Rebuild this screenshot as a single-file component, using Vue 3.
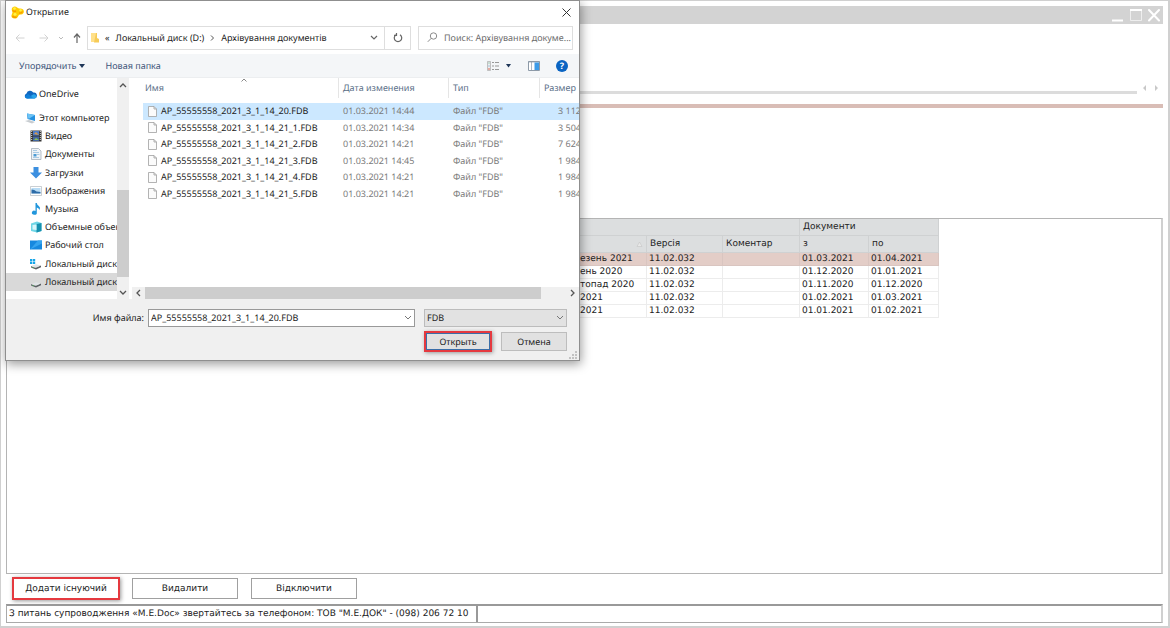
<script setup>
import { ref } from 'vue'

const fileName = ref('AP_55555558_2021_3_1_14_20.FDB')
const fileType = ref('FDB')
const search = ref('')
const selected = ref(0)

const places = [
  { icon: 'video', label: 'Видео' },
  { icon: 'doc', label: 'Документы' },
  { icon: 'down', label: 'Загрузки' },
  { icon: 'image', label: 'Изображения' },
  { icon: 'music', label: 'Музыка' },
  { icon: 'cube', label: 'Объемные объекты' },
  { icon: 'desk', label: 'Рабочий стол' },
  { icon: 'sysdisk', label: 'Локальный диск' },
  { icon: 'disk', label: 'Локальный диск', active: true },
]

const files = [
  { name: 'AP_55555558_2021_3_1_14_20.FDB', date: '01.03.2021 14:44', size: '3 112' },
  { name: 'AP_55555558_2021_3_1_14_21_1.FDB', date: '01.03.2021 14:34', size: '3 504' },
  { name: 'AP_55555558_2021_3_1_14_21_2.FDB', date: '01.03.2021 14:21', size: '7 624' },
  { name: 'AP_55555558_2021_3_1_14_21_3.FDB', date: '01.03.2021 14:45', size: '1 984' },
  { name: 'AP_55555558_2021_3_1_14_21_4.FDB', date: '01.03.2021 14:21', size: '1 984' },
  { name: 'AP_55555558_2021_3_1_14_21_5.FDB', date: '01.03.2021 14:21', size: '1 984' },
]

const archives = [
  { period: 'езень 2021', version: '11.02.032', from: '01.03.2021', to: '01.04.2021' },
  { period: 'ень 2020', version: '11.02.032', from: '01.12.2020', to: '01.01.2021' },
  { period: 'топад 2020', version: '11.02.032', from: '01.11.2020', to: '01.12.2020' },
  { period: '2021', version: '11.02.032', from: '01.02.2021', to: '01.03.2021' },
  { period: '2021', version: '11.02.032', from: '01.01.2021', to: '01.02.2021' },
]
</script>

<template>
  <div class="app">
    <header class="app-title">
      <button type="button" aria-label="Згорнути">
        <svg width="12" height="14" viewBox="0 0 12 14"><path d="M0 12.500h11" stroke="#fff" stroke-width="2" /></svg>
      </button>
      <button type="button" aria-label="Розгорнути">
        <svg width="12" height="14" viewBox="0 0 12 14"><path d="M.5 2v10.500h11V2" fill="none" stroke="#eee" /><path d="M0 2h12" stroke="#fff" stroke-width="2" /></svg>
      </button>
      <button type="button" aria-label="Закрити">
        <svg width="12" height="14" viewBox="0 0 12 14"><path d="M1 2l10 10.500M11 2L1 12.500" stroke="#fff" stroke-width="2" stroke-linecap="round" /></svg>
      </button>
    </header>

    <div class="tabs">
      <div class="tabs-line"></div>
      <svg width="22" height="8" viewBox="0 0 22 8"><path d="M5 1v6L2 4zM14 1v6l3-3z" fill="#c8c8c8" /></svg>
    </div>
    <div class="accent"></div>

    <main class="panel">
      <table class="archive">
        <colgroup>
          <col class="c-period" /><col class="c-version" /><col class="c-note" /><col class="c-from" /><col class="c-to" />
        </colgroup>
        <thead>
          <tr><th colspan="3"></th><th colspan="2">Документи</th></tr>
          <tr>
            <th class="sorted"><svg width="7" height="7" viewBox="0 0 7 7"><path d="M3.500 1L1 5.500h5z" fill="#e8e8e8" stroke="#c4c4c4" stroke-width=".6" /></svg></th>
            <th>Версія</th><th>Коментар</th><th>з</th><th>по</th>
          </tr>
        </thead>
        <tbody>
          <tr v-for="(a, i) in archives" :key="i" :class="{ current: i === 0 }">
            <td class="period">{{ a.period }}</td><td>{{ a.version }}</td><td></td><td>{{ a.from }}</td><td>{{ a.to }}</td>
          </tr>
        </tbody>
      </table>
    </main>

    <div class="actions">
      <button type="button" class="marked">Додати існуючий</button>
      <button type="button">Видалити</button>
      <button type="button">Відключити</button>
    </div>

    <footer class="status">
      <div class="support">З питань супроводження «M.E.Doc» звертайтесь за телефоном: ТОВ "М.Е.ДОК" - (098) 206 72 10</div>
      <div class="status-rest"></div>
    </footer>

    <section class="dialog" role="dialog" aria-labelledby="dialog-title">
      <div class="dlg-title">
        <svg width="13" height="13" viewBox="0 0 13 13">
          <path d="M1 2Q2.500-.3 5 .8 6.500 2 8 2.500q4.500-.5 4.800 2.500T10 8.500Q8.500 8 7.500 9.500 6.500 12.800 3.500 12.600-.2 12 .6 9 1.500 7 1.500 6 .3 4 1 2z" fill="#fc0" />
          <path d="M1.500 10q1.500 2 4 1M1.500 4.500q1.500 1.500 3.500.5M8 7q2.500.5 3.500-1.500" fill="none" stroke="#f79a00" stroke-width="1.400" />
          <circle cx="3.500" cy="2.500" r="1.300" fill="#fff04a" /><circle cx="9.500" cy="4.300" r="1.200" fill="#fff04a" /><circle cx="4" cy="8.300" r="1.500" fill="#fff04a" />
        </svg>
        <span id="dialog-title">Открытие</span>
        <button type="button" class="dlg-close" aria-label="Закрыть">
          <svg width="9" height="9" viewBox="0 0 9 9"><path d="M.5.5l8 8M8.500.5l-8 8" stroke="#333" /></svg>
        </button>
      </div>

      <div class="nav">
        <div class="nav-buttons">
          <button type="button" aria-label="Назад"><svg width="10" height="10" viewBox="0 0 10 10"><path d="M9.500 5H1M4.500 1.500L1 5l3.500 3.500" fill="none" stroke="#d2d2d2" /></svg></button>
          <button type="button" aria-label="Вперед"><svg width="10" height="10" viewBox="0 0 10 10"><path d="M.5 5H9M5.500 1.500L9 5 5.500 8.500" fill="none" stroke="#d2d2d2" /></svg></button>
          <button type="button" aria-label="Последние расположения"><svg width="6" height="10" viewBox="0 0 6 10"><path d="M1 4l2 2 2-2" fill="none" stroke="#bbb" /></svg></button>
          <button type="button" aria-label="Вверх"><svg width="8" height="10" viewBox="0 0 8 10"><path d="M4 10V1M1 4.500L4 1l3 3.500" fill="none" stroke="#666" stroke-width="1.200" /></svg></button>
        </div>
        <div class="address">
          <svg class="folder" width="8" height="11" viewBox="0 0 8 11"><path d="M0 1h6v9H0z" fill="#ffe08a" /><path d="M5 1h1v5l2 1v3.500H3z" fill="#f6cb58" /></svg>
          <span class="crumb">«</span>
          <a href="#" class="crumb">Локальный диск (D:)</a>
          <svg width="5" height="8" viewBox="0 0 5 8"><path d="M1 1.500L3.500 4 1 6.500" fill="none" stroke="#555" /></svg>
          <a href="#" class="crumb">Архівування документів</a>
          <button type="button" class="drop" aria-label="Предыдущие расположения"><svg width="8" height="6" viewBox="0 0 8 6"><path d="M1 1l3 3 3-3" fill="none" stroke="#666" stroke-width="1.200" /></svg></button>
          <button type="button" class="refresh" aria-label="Обновить"><svg width="10" height="10" viewBox="0 0 10 10"><path d="M7 1.800A3.700 3.700 0 1 1 3 1.800M3.500 -.2v2.500H1" fill="none" stroke="#666" stroke-width="1.200" /></svg></button>
        </div>
        <label class="search">
          <svg width="11" height="11" viewBox="0 0 11 11"><circle cx="6.500" cy="4" r="3.200" fill="none" stroke="#8a8a8a" /><path d="M4.200 6.300L.8 9.800" stroke="#8a8a8a" /></svg>
          <input v-model="search" type="text" placeholder="Поиск: Архівування докуме..." aria-label="Поиск" />
        </label>
      </div>

      <div class="toolbar">
        <button type="button" class="tool-text">Упорядочить <svg width="6" height="4" viewBox="0 0 6 4"><path d="M0 0h6L3 4z" fill="#1e3658" /></svg></button>
        <button type="button" class="tool-text">Новая папка</button>
        <span class="spacer"></span>
        <button type="button" class="view" aria-label="Изменить представление">
          <svg width="12" height="10" viewBox="0 0 12 10"><path d="M.5.5h3v9h-3z" fill="#eee" stroke="#aaa" stroke-width=".7" /><path d="M1.500 2h1" stroke="#5a8" /><path d="M1.500 5h1" stroke="#59c" /><path d="M1.500 8h1" stroke="#d65" stroke-width="2" /><path d="M5 1.500h2m1 0h4M5 5h2m1 0h4M5 8.500h2m1 0h4" stroke="#999" /></svg>
          <svg width="5" height="4" viewBox="0 0 5 4"><path d="M0 0h5L2.500 3.500z" fill="#1e3658" /></svg>
        </button>
        <button type="button" class="preview" aria-label="Область просмотра">
          <svg width="12" height="10" viewBox="0 0 12 10"><path d="M.5.5h11v9H.5z" fill="#fff" stroke="#8d9aa8" /><path d="M0 1h12M3.500 1v8" stroke="#8d9aa8" stroke-width=".7" /><path d="M6.500 1.500H11V9H6.500z" fill="#3c9be8" /></svg>
        </button>
        <button type="button" class="help" aria-label="Справка">?</button>
      </div>

      <div class="browser">
        <nav class="tree">
          <a href="#" class="place root">
            <svg width="13" height="9" viewBox="0 0 13 9"><path d="M3 8.500a2.600 2.600 0 0 1-.5-5A3.700 3.700 0 0 1 9.200 2.500 3 3 0 0 1 10.500 8.500z" fill="#1067c0" /><path d="M3 8.500L9 4.500a2.500 2.500 0 0 1 3.500 2.300q0 1.700-2 1.700z" fill="#28a4ea" /><path d="M3 8.500Q1 8.500.8 6.500L4 4l5 3.500z" fill="#0f7fd8" /></svg>
            OneDrive
          </a>
          <div class="tree-list">
            <a href="#" class="place root">
              <svg width="13" height="11" viewBox="0 0 13 11"><path d="M3 .5l8 1.500v6L3.500 6z" fill="#2591e0" /><path d="M3 .5l8 1.500-6.500 4z" fill="#6cc3f5" /><path d="M1 8l4-1 6 2-3 1.500z" fill="#c7ccd0" /></svg>
              Этот компьютер
            </a>
            <a v-for="(p, i) in places" :key="i" href="#" class="place" :class="{ active: p.active }">
              <svg width="12" height="12" viewBox="0 0 12 12">
                <g v-if="p.icon === 'video'"><path d="M.5.5h11v11H.5z" fill="#333" /><path d="M3 1h6v4.500H3z" fill="#4a7cc9" /><path d="M3 6.500h6V11H3z" fill="#4266a0" /><path d="M4 4l2-2 3 3z" fill="#d89748" /><path d="M4 10l2-2 3 2z" fill="#8ac05a" /><path d="M1.700 1v10M10.300 1v10" stroke="#ddd" stroke-dasharray="1 1" /></g>
                <g v-else-if="p.icon === 'doc'"><path d="M1.500.5h7l2.500 2.500v8.500H1.500z" fill="#f0f3f6" stroke="#9ba7b2" stroke-width=".7" /><path d="M3 2.500h4M3 4.500h6M7 6.500h2.500M3 9.500h6" stroke="#a9cbe4" /><path d="M3.500 6h3v2.500h-3z" fill="#4c9bd4" /></g>
                <g v-else-if="p.icon === 'down'"><path d="M3.500 0h5v5.500H12L6 11.500 0 5.500h3.500z" fill="#3b8fe0" /></g>
                <g v-else-if="p.icon === 'image'"><path d="M.5 1.500h11v9H.5z" fill="#fff" stroke="#b3bac0" stroke-width=".7" /><path d="M1.500 3h9v5.500h-9z" fill="#b9dcf5" /><path d="M1.500 4.500q3 0 5 2l4 .5v1.500h-9z" fill="#2d6ca8" /></g>
                <g v-else-if="p.icon === 'music'"><path d="M5.500 0h1.300q.2 2 2 3t1 4q-1-2-3-2.500v5A2.500 2 0 1 1 5.500 8z" fill="#2196dc" /></g>
                <g v-else-if="p.icon === 'cube'"><path d="M1 2.500L7 .5l4.500 1.500v8L7 11.500 1 10z" fill="#6fd6e6" /><path d="M6.500 3L11.500 2v8l-5 1.500z" fill="#178fae" /><path d="M2.500 4L6.500 3.500V9l-4-.5z" fill="#d9f6fa" /></g>
                <g v-else-if="p.icon === 'desk'"><path d="M0 1.500h12v9H0z" fill="#1688df" /><path d="M0 10.500L8 1.500h4v3z" fill="#35a4ef" /></g>
                <g v-else><path v-if="p.icon === 'sysdisk'" d="M0 1h2.300v2.200H0zM2.900 1h2.300v2.200H2.900zM0 3.800h2.300V6H0zM2.900 3.800h2.300V6H2.900z" fill="#16a5e8" /><path d="M1 8l4 1.500 6-2v1.700L6 11.500 1 9.500z" fill="#5b6064" /><path d="M1 8l5-1.700 5 1.200-5 2.200z" fill="#dfe3e5" /><path d="M2.500 9.700h1.500" stroke="#5fbf6a" stroke-width=".8" /></g>
              </svg>
              {{ p.label }}
            </a>
          </div>
        </nav>
        <div class="vbar">
          <svg width="8" height="6" viewBox="0 0 8 6"><path d="M1 5l3-3 3 3" fill="none" stroke="#555" stroke-width="1.300" /></svg>
          <div class="vthumb"></div>
          <svg width="8" height="6" viewBox="0 0 8 6"><path d="M1 1l3 3 3-3" fill="none" stroke="#555" stroke-width="1.300" /></svg>
        </div>

        <div class="listing">
          <div class="list-clip">
            <table class="files">
              <colgroup><col class="f-name" /><col class="f-date" /><col class="f-type" /><col class="f-size" /></colgroup>
              <thead><tr>
                <th>Имя<svg class="asc" width="6" height="4" viewBox="0 0 6 4"><path d="M.5 3.500L3 1l2.500 2.500" fill="none" stroke="#888" /></svg></th>
                <th>Дата изменения</th><th>Тип</th><th>Размер</th>
              </tr></thead>
            </table>
            <table class="files rows">
              <colgroup><col class="f-name" /><col class="f-date" /><col class="f-type" /><col class="f-size" /></colgroup>
              <tbody>
                <tr v-for="(f, i) in files" :key="f.name" :class="{ picked: i === selected }" @click="selected = i; fileName = f.name">
                  <td class="name"><svg width="9" height="11" viewBox="0 0 9 11"><path d="M.5.5h5.500l2.500 2.500v7.500h-8z" fill="#fbfbfb" stroke="#a0a0a0" stroke-width=".8" /><path d="M6 .5V3h2.500" fill="none" stroke="#a0a0a0" stroke-width=".8" /></svg>{{ f.name }}</td>
                  <td>{{ f.date }}</td><td>Файл "FDB"</td><td class="size">{{ f.size }}</td>
                </tr>
              </tbody>
            </table>
          </div>
          <div class="hbar">
            <svg width="6" height="8" viewBox="0 0 6 8"><path d="M5 1L2 4l3 3" fill="none" stroke="#555" stroke-width="1.300" /></svg>
            <div class="hthumb"></div>
            <svg width="6" height="8" viewBox="0 0 6 8"><path d="M1 1l3 3-3 3" fill="none" stroke="#555" stroke-width="1.300" /></svg>
          </div>
        </div>
      </div>

      <div class="dlg-foot">
        <div class="field-row">
          <label for="file-name">Имя файла:</label>
          <div class="combo">
            <input id="file-name" v-model="fileName" type="text" />
            <button type="button" aria-label="Показать список"><svg width="8" height="6" viewBox="0 0 8 6"><path d="M1 1l3 3 3-3" fill="none" stroke="#777" /></svg></button>
          </div>
          <div class="type">
            <select v-model="fileType" aria-label="Тип файла"><option>FDB</option></select>
            <svg width="8" height="6" viewBox="0 0 8 6"><path d="M1 1l3 3 3-3" fill="none" stroke="#777" /></svg>
          </div>
        </div>
        <div class="button-row">
          <button type="button" class="open">Открыть</button>
          <button type="button">Отмена</button>
        </div>
        <svg class="grip" width="8" height="8" viewBox="0 0 8 8"><path d="M6 0h2v2H6zM3 3h2v2H3zM6 3h2v2H6zM0 6h2v2H0zM3 6h2v2H3zM6 6h2v2H6z" fill="#c2c2c2" /></svg>
      </div>
    </section>
  </div>
</template>

<style>
body {
  margin: 0;
  background: #fff;
}
</style>

<style scoped>
* {
  box-sizing: border-box;
}
button,
input,
select {
  font: inherit;
  color: inherit;
  text-rendering: inherit;
  margin: 0;
  padding: 0;
  border: 0;
  background: none;
  border-radius: 0;
  outline: none;
}
a {
  color: inherit;
  text-decoration: none;
}
svg {
  display: block;
  flex: none;
}
table {
  border-collapse: separate;
  border-spacing: 0;
  table-layout: fixed;
}
th,
td {
  font-weight: normal;
  text-align: left;
  white-space: nowrap;
}

.app {
  position: relative;
  display: flex;
  flex-direction: column;
  min-height: 100vh;
  padding: 5px 5px 3px;
  border: 1px solid #d0d0d0;
  border-right-width: 2px;
  border-bottom-width: 2px;
  font: 9px/12px "DejaVu Sans", Verdana, sans-serif;
  text-rendering: geometricPrecision;
  color: #222;
  background: #fff;
}
.app-title {
  display: flex;
  justify-content: flex-end;
  align-items: center;
  gap: 6px;
  height: 18px;
  padding-right: 3px;
  background: #d3d3d3;
}
.tabs {
  display: flex;
  align-items: flex-end;
  gap: 4px;
  height: 70px;
}
.tabs svg {
  margin-bottom: 2px;
}
.tabs-line {
  flex: 1;
  height: 3px;
  background: #dcdcdc;
}
.accent {
  height: 4px;
  margin-top: 10px;
  background: #d9bdb6;
}
.panel {
  flex: 1;
  margin-top: 110px;
  border: 1px solid #b4b4b4;
  border-right: 2px solid #d0d0d0;
}
.archive {
  width: 932px;
}
.c-period {
  width: 640px;
}
.c-version {
  width: 76px;
}
.c-note {
  width: 77px;
}
.c-from {
  width: 69px;
}
.archive th {
  height: 17px;
  padding: 0 3px;
  line-height: 15px;
  background: #dcdedf;
  border-right: 1px solid #cfd1d2;
  border-bottom: 1px solid #cfd1d2;
}
.archive th.sorted svg {
  margin-left: auto;
}
.archive td {
  padding: 1px 2px 0;
  line-height: 11px;
  border-right: 1px solid #ececec;
  border-bottom: 1px solid #ececec;
}
.archive td.period {
  padding-left: 573px;
}
.archive .current td {
  background: #e3cdc7;
  border-color: #d9c5c0;
}
.actions {
  display: flex;
  gap: 13px;
  padding: 4px 7px 5px;
}
.actions button {
  width: 106px;
  height: 21px;
  border: 1px solid #a0a0a0;
}
.actions .marked {
  outline: 2px solid #e5393f;
  outline-offset: -1px;
  box-shadow: 1px 1px 4px 1px #999;
}
.status {
  display: flex;
  height: 19px;
  border: 1px solid #aaa;
  border-top: 2px solid #999;
  border-right: 2px solid #d0d0d0;
}
.support {
  padding: 0 8px 0 2px;
  line-height: 17px;
  white-space: nowrap;
  border-right: 2px solid #999;
}
.status-rest {
  flex: 1;
}

.dialog {
  position: absolute;
  top: -1px;
  left: 4px;
  width: 575px;
  border: 1px solid #8f8f8f;
  background: #fff;
  box-shadow: 1px 3px 10px rgba(0, 0, 0, 0.4);
  font: 9px/12px "Noto Sans", "Open Sans", sans-serif;
  color: #222;
}
.dlg-title {
  display: flex;
  align-items: center;
  gap: 2px;
  height: 22px;
  padding: 0 8px 0 5px;
}
.dlg-close {
  margin-left: auto;
}
.nav {
  display: flex;
  align-items: center;
  height: 31px;
  padding: 0 6px 2px 0;
}
.nav-buttons {
  display: flex;
  align-items: center;
  gap: 9px;
  width: 81px;
  padding-left: 9px;
}
.nav-buttons button:nth-child(2) {
  margin-left: 5px;
}
.address,
.search {
  display: flex;
  align-items: center;
  height: 24px;
  border: 1px solid #dedede;
}
.address {
  flex: 1;
  gap: 6px;
  padding-left: 3px;
}
.crumb {
  white-space: nowrap;
}
.drop {
  margin-left: auto;
}
.refresh {
  display: flex;
  align-items: center;
  justify-content: center;
  align-self: stretch;
  width: 26px;
  border-left: 1px solid #dedede;
}
.search {
  width: 155px;
  margin-left: 7px;
  padding-left: 8px;
  gap: 6px;
  color: #666;
}
.search input {
  flex: 1;
  min-width: 0;
}
.search input::placeholder {
  color: #6c6c6c;
  opacity: 1;
}
.toolbar {
  display: flex;
  align-items: center;
  height: 24px;
  padding: 0 11px 0 13px;
  background: #f4f6f8;
  border-bottom: 1px solid #eceef0;
  color: #3c5478;
}
.tool-text {
  display: flex;
  align-items: center;
  gap: 2px;
  margin-right: 21px;
}
.spacer {
  flex: 1;
}
.view {
  display: flex;
  align-items: center;
  gap: 7px;
}
.preview {
  margin: 0 16px 0 17px;
}
.help {
  width: 12px;
  height: 12px;
  border-radius: 50%;
  background: #0a64c2;
  color: #fff;
  font-weight: bold;
  line-height: 12px;
}
.browser {
  display: flex;
  height: 221px;
}
.tree {
  display: flex;
  flex-direction: column;
  width: 111px;
  padding: 7px 0 8px;
  overflow: hidden;
}
.tree > .place {
  height: 18px;
  margin-bottom: 6px;
}
.tree-list {
  display: grid;
  grid-auto-rows: 1fr;
  flex: 1;
}
.place {
  display: flex;
  align-items: center;
  gap: 3px;
  padding-left: 24px;
  white-space: nowrap;
}
.place.root {
  gap: 2px;
  padding-left: 18px;
}
.place.active {
  background: #d9d9d9;
}
.vbar {
  display: flex;
  flex-direction: column;
  align-items: center;
  width: 12px;
  padding: 4px 0 3px;
  background: #f0f0f0;
}
.vthumb {
  width: 12px;
  height: 87px;
  margin: auto 0 13px;
  background: #cdcdcd;
}
.listing {
  display: flex;
  flex: 1;
  flex-direction: column;
  min-width: 0;
  padding-left: 3px;
}
.list-clip {
  flex: 1;
  overflow: hidden;
}
.files {
  width: 457px;
  margin-left: 11px;
  color: #7a7a7a;
}
.f-name {
  width: 196px;
}
.f-date {
  width: 110px;
}
.f-type {
  width: 91px;
}
.files th {
  position: relative;
  height: 20px;
  padding: 0 4px;
  border-right: 1px solid #e5e5e5;
  color: #5b6f88;
}
.files th:first-child {
  padding-left: 2px;
}
.asc {
  position: absolute;
  top: 0;
  left: 50%;
}
.rows {
  height: 99px;
  margin-top: 5px;
}
.files td {
  padding: 0 4px;
}
.files .name {
  display: flex;
  align-items: center;
  gap: 4px;
  height: 100%;
  padding-left: 5px;
  color: #222;
}
.files .picked td {
  background: #cce8ff;
}
.files .size {
  padding-left: 18px;
}
.hbar {
  display: flex;
  align-items: center;
  height: 12px;
  padding: 0 3px;
  background: #f0f0f0;
}
.hthumb {
  width: 396px;
  height: 12px;
  margin: 0 auto 0 4px;
  background: #cdcdcd;
}
.dlg-foot {
  position: relative;
  padding: 10px 12px 9px 0;
  background: #f0f0f0;
}
.field-row,
.button-row {
  display: flex;
  justify-content: flex-end;
}
.field-row {
  align-items: center;
}
.combo {
  display: flex;
  align-items: center;
  width: 267px;
  height: 18px;
  margin: 0 9px 0 4px;
  padding: 0 2px;
  border: 1px solid #999;
  background: #fff;
}
.combo input {
  flex: 1;
  min-width: 0;
}
.type {
  display: flex;
  align-items: center;
  width: 143px;
  height: 18px;
  border: 1px solid #bcbcbc;
  background: #e2e2e2;
}
.type select {
  flex: 1;
  min-width: 0;
  height: 16px;
  padding-left: 2px;
  appearance: none;
}
.type svg {
  margin-right: 2px;
}
.button-row {
  gap: 10px;
  margin-top: 5px;
}
.button-row button {
  width: 66px;
  height: 19px;
  border: 1px solid #bdbdbd;
  background: #e1e1e1;
}
.button-row .open {
  border: 2px solid #3a6ea8;
  outline: 2px solid #e5393f;
  outline-offset: -1px;
  box-shadow: 1px 1px 4px 1px #999;
}
.grip {
  position: absolute;
  right: 2px;
  bottom: 1px;
}
</style>
